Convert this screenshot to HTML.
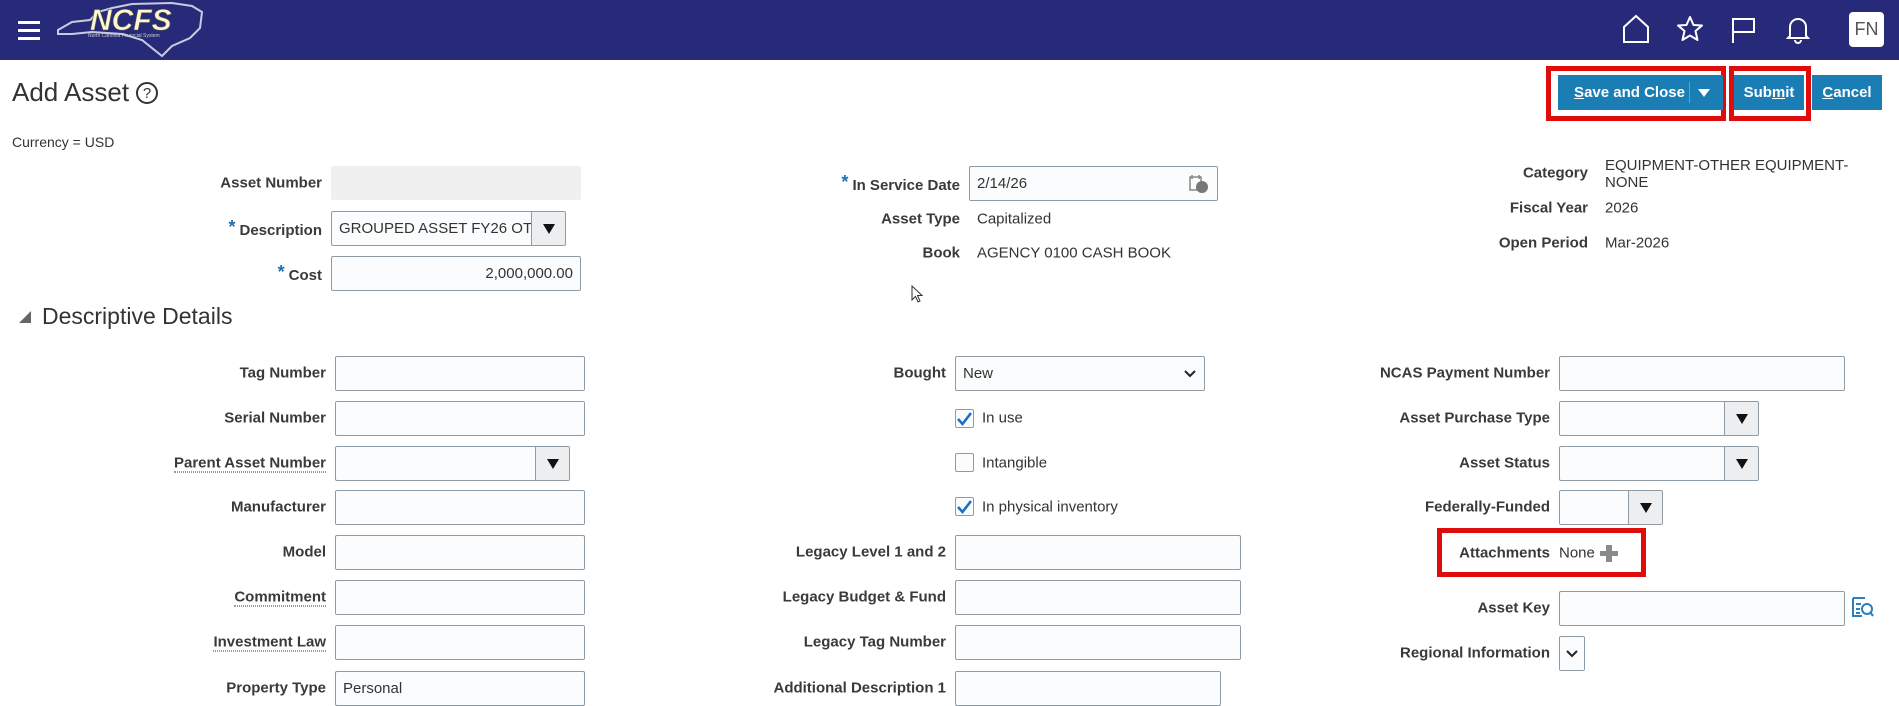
<!DOCTYPE html>
<html><head><meta charset="utf-8"><style>
*{box-sizing:border-box;margin:0;padding:0}
body{width:1899px;height:686px;overflow:hidden;background:#fff;font-family:"Liberation Sans",Arial,sans-serif;color:#333;position:relative}
.a{position:absolute}
.hdr{left:0;top:0;width:1899px;height:60px;background:#262a78}
.lbl{position:absolute;font-size:15px;font-weight:bold;color:#3a3a3a;text-align:right;white-space:nowrap;transform:translateY(-50%)}
.val{position:absolute;font-size:15px;color:#333;white-space:nowrap;transform:translateY(-50%)}
.inp{position:absolute;height:35px;border:1px solid #8f9ba5;border-radius:2px;background:#fbfcfd;font-size:15px;color:#333;padding:0 7px;line-height:33px;white-space:nowrap;overflow:hidden}
.dd{position:absolute;top:0;right:0;bottom:0;border-left:1px solid #8f9ba5;background:#eceef0}
.dd:after{content:"";position:absolute;left:50%;top:50%;margin:-5px 0 0 -6px;border-left:6px solid transparent;border-right:6px solid transparent;border-top:10px solid #111}
.ul{border-bottom:1px dotted #333}
.req{color:#1f6fb0;font-weight:bold;font-size:18px;margin-right:4px;vertical-align:2px}
.btn{position:absolute;top:75px;height:35px;background:#1a7db4;color:#fff;font-weight:bold;font-size:15px;line-height:35px;text-align:center}
.red{position:absolute;border:5px solid #e00b0b}
.cb{position:absolute;width:19px;height:19px;border:1px solid #8f9ba5;border-radius:2px;background:#fbfcfd}
</style></head><body>
<div class="a hdr"></div>
<div class="a" style="left:18px;top:21px;width:22px;height:3px;background:#fff"></div>
<div class="a" style="left:18px;top:29px;width:22px;height:3px;background:#fff"></div>
<div class="a" style="left:18px;top:37px;width:22px;height:3px;background:#fff"></div>
<svg class="a" style="left:52px;top:0" width="160" height="60" viewBox="0 0 160 60">
<path d="M6 30 L20 22 L38 20 L46 12 L60 8 L80 4 L120 3 L140 6 L150 12 L148 28 L138 38 L120 46 L110 56 L90 40 L70 34 L40 32 L20 34 L6 34 Z" fill="none" stroke="#c9cbe0" stroke-width="2"/>
<text x="38" y="30" font-family="Liberation Sans" font-weight="bold" font-style="italic" font-size="30" fill="#fff6d0" stroke="#555" stroke-width="0.6">NCFS</text>
<text x="36" y="37" font-family="Liberation Sans" font-size="5" fill="#ccc">North Carolina Financial System</text>
</svg>
<svg class="a" style="left:1622px;top:14px" width="28" height="30" viewBox="0 0 28 30"><path d="M2 13 L14 2 L26 13 V28 H2 Z" fill="none" stroke="#fff" stroke-width="2"/></svg>
<svg class="a" style="left:1676px;top:15px" width="28" height="28" viewBox="0 0 28 28"><path d="M14 2 L17.5 10 L26 10.5 L19.5 16 L21.5 25 L14 20.5 L6.5 25 L8.5 16 L2 10.5 L10.5 10 Z" fill="none" stroke="#fff" stroke-width="2" stroke-linejoin="round"/></svg>
<svg class="a" style="left:1731px;top:16px" width="26" height="28" viewBox="0 0 26 28"><path d="M2 27 V3 H23 V16 H2" fill="none" stroke="#fff" stroke-width="2"/></svg>
<svg class="a" style="left:1786px;top:15px" width="24" height="30" viewBox="0 0 24 30"><path d="M4 21 V12 a8 8 0 0 1 16 0 V21 L22 23 H2 Z M9 25 a3 3 0 0 0 6 0" fill="none" stroke="#fff" stroke-width="2"/></svg>
<div class="a" style="left:1849px;top:12px;width:35px;height:35px;background:#fff;border-radius:4px;color:#555;font-size:18px;text-align:center;line-height:35px">FN</div>

<div class="a" style="left:12px;top:77px;font-size:26px;color:#333">Add Asset</div>
<div class="a" style="left:136px;top:82px;width:22px;height:22px;border:2px solid #333;border-radius:50%;font-size:15px;text-align:center;line-height:19px">?</div>
<div class="a" style="left:12px;top:134px;font-size:14px">Currency = USD</div>

<div class="red" style="left:1546px;top:66px;width:180px;height:55px"></div>
<div class="red" style="left:1729px;top:66px;width:82px;height:55px"></div>
<div class="btn" style="left:1558px;width:165px"><span style="position:absolute;left:12px;width:119px"><u>S</u>ave and Close</span><span style="position:absolute;left:131px;top:7px;width:1px;height:21px;background:#5ba3cc"></span><span style="position:absolute;left:140px;top:14px;border-left:6px solid transparent;border-right:6px solid transparent;border-top:8px solid #fff"></span></div>
<div class="btn" style="left:1734px;width:70px">Sub<u>m</u>it</div>
<div class="btn" style="left:1812px;width:70px"><u>C</u>ancel</div>

<div class="lbl" style="right:1577px;top:183px">Asset Number</div>
<div class="a" style="left:331px;top:166px;width:250px;height:34px;background:#f0f0f0;border-radius:2px"></div>
<div class="lbl" style="right:1577px;top:228px"><span class="req">*</span>Description</div>
<div class="inp" style="left:331px;top:211px;width:235px">GROUPED ASSET FY26 OT<div class="dd" style="width:34px"></div></div>
<div class="lbl" style="right:1577px;top:273px"><span class="req">*</span>Cost</div>
<div class="inp" style="left:331px;top:256px;width:250px;text-align:right">2,000,000.00</div>

<div class="lbl" style="right:939px;top:183px"><span class="req">*</span>In Service Date</div>
<div class="inp" style="left:969px;top:166px;width:249px">2/14/26
<svg style="position:absolute;right:8px;top:7px" width="20" height="20" viewBox="0 0 20 20"><rect x="1" y="3" width="11" height="13" fill="none" stroke="#888" stroke-width="1.5"/><path d="M3 1v4M10 1v4" stroke="#888" stroke-width="1.5"/><circle cx="13" cy="13" r="6" fill="#777"/></svg></div>
<div class="lbl" style="right:939px;top:219px">Asset Type</div>
<div class="val" style="left:977px;top:219px">Capitalized</div>
<div class="lbl" style="right:939px;top:253px">Book</div>
<div class="val" style="left:977px;top:253px">AGENCY 0100 CASH BOOK</div>
<svg class="a" style="left:911px;top:285px" width="14" height="20" viewBox="0 0 14 20"><path d="M1 1 L1 15 L4.5 11.5 L7 17 L9 16 L6.5 10.5 L11 10.5 Z" fill="#fff" stroke="#333" stroke-width="1"/></svg>

<div class="lbl" style="right:311px;top:173px">Category</div>
<div class="val" style="left:1605px;top:172px;transform:none;top:157px;line-height:17px">EQUIPMENT-OTHER EQUIPMENT-<br>NONE</div>
<div class="lbl" style="right:311px;top:208px">Fiscal Year</div>
<div class="val" style="left:1605px;top:208px">2026</div>
<div class="lbl" style="right:311px;top:243px">Open Period</div>
<div class="val" style="left:1605px;top:243px">Mar-2026</div>

<div class="a" style="left:19px;top:311px;width:0;height:0;border-left:12px solid transparent;border-bottom:12px solid #666"></div>
<div class="a" style="left:42px;top:303px;font-size:23px;color:#333">Descriptive Details</div>

<!-- left column -->
<div class="lbl" style="right:1573px;top:373px">Tag Number</div>
<div class="inp" style="left:335px;top:356px;width:250px"></div>
<div class="lbl" style="right:1573px;top:418px">Serial Number</div>
<div class="inp" style="left:335px;top:401px;width:250px"></div>
<div class="lbl" style="right:1573px;top:463px"><span class="ul">Parent Asset Number</span></div>
<div class="inp" style="left:335px;top:446px;width:235px"><div class="dd" style="width:34px"></div></div>
<div class="lbl" style="right:1573px;top:507px">Manufacturer</div>
<div class="inp" style="left:335px;top:490px;width:250px"></div>
<div class="lbl" style="right:1573px;top:552px">Model</div>
<div class="inp" style="left:335px;top:535px;width:250px"></div>
<div class="lbl" style="right:1573px;top:597px"><span class="ul">Commitment</span></div>
<div class="inp" style="left:335px;top:580px;width:250px"></div>
<div class="lbl" style="right:1573px;top:642px"><span class="ul">Investment Law</span></div>
<div class="inp" style="left:335px;top:625px;width:250px"></div>
<div class="lbl" style="right:1573px;top:688px">Property Type</div>
<div class="inp" style="left:335px;top:671px;width:250px">Personal</div>

<!-- middle column -->
<div class="lbl" style="right:953px;top:373px">Bought</div>
<div class="inp" style="left:955px;top:356px;width:250px">New<svg style="position:absolute;right:8px;top:13px" width="12" height="8" viewBox="0 0 12 8"><path d="M1 1 L6 6 L11 1" fill="none" stroke="#222" stroke-width="2"/></svg></div>
<div class="cb" style="left:955px;top:409px"><svg width="17" height="17" viewBox="0 0 17 17"><path d="M2 9 L6.5 14 L15 3" fill="none" stroke="#1a6fc4" stroke-width="2.6"/></svg></div>
<div class="val" style="left:982px;top:418px">In use</div>
<div class="cb" style="left:955px;top:453px"></div>
<div class="val" style="left:982px;top:463px">Intangible</div>
<div class="cb" style="left:955px;top:497px"><svg width="17" height="17" viewBox="0 0 17 17"><path d="M2 9 L6.5 14 L15 3" fill="none" stroke="#1a6fc4" stroke-width="2.6"/></svg></div>
<div class="val" style="left:982px;top:507px">In physical inventory</div>
<div class="lbl" style="right:953px;top:552px">Legacy Level 1 and 2</div>
<div class="inp" style="left:955px;top:535px;width:286px"></div>
<div class="lbl" style="right:953px;top:597px">Legacy Budget &amp; Fund</div>
<div class="inp" style="left:955px;top:580px;width:286px"></div>
<div class="lbl" style="right:953px;top:642px">Legacy Tag Number</div>
<div class="inp" style="left:955px;top:625px;width:286px"></div>
<div class="lbl" style="right:953px;top:688px">Additional Description 1</div>
<div class="inp" style="left:955px;top:671px;width:266px"></div>

<!-- right column -->
<div class="lbl" style="right:349px;top:373px">NCAS Payment Number</div>
<div class="inp" style="left:1559px;top:356px;width:286px"></div>
<div class="lbl" style="right:349px;top:418px">Asset Purchase Type</div>
<div class="inp" style="left:1559px;top:401px;width:200px"><div class="dd" style="width:34px"></div></div>
<div class="lbl" style="right:349px;top:463px">Asset Status</div>
<div class="inp" style="left:1559px;top:446px;width:200px"><div class="dd" style="width:34px"></div></div>
<div class="lbl" style="right:349px;top:507px">Federally-Funded</div>
<div class="inp" style="left:1559px;top:490px;width:104px"><div class="dd" style="width:34px"></div></div>
<div class="red" style="left:1437px;top:528px;width:209px;height:49px"></div>
<div class="lbl" style="right:349px;top:553px">Attachments</div>
<div class="val" style="left:1559px;top:553px">None</div>
<div class="a" style="left:1600px;top:551px;width:18px;height:5px;background:#8a8a8a"></div>
<div class="a" style="left:1606px;top:545px;width:6px;height:17px;background:#8a8a8a"></div>
<div class="lbl" style="right:349px;top:608px">Asset Key</div>
<div class="inp" style="left:1559px;top:591px;width:286px"></div>
<svg class="a" style="left:1852px;top:596px" width="22" height="24" viewBox="0 0 22 24"><path d="M1 2 H13 M1 2 V20 H10 M4 8 H9 M4 13 H8 M4 17 H8" fill="none" stroke="#2a7fc0" stroke-width="2"/><circle cx="15" cy="13" r="5" fill="none" stroke="#2a7fc0" stroke-width="2"/><path d="M18.5 16.5 L21 20" stroke="#2a7fc0" stroke-width="2"/></svg>
<div class="lbl" style="right:349px;top:653px">Regional Information</div>
<div class="inp" style="left:1559px;top:636px;width:26px"><svg style="position:absolute;left:6px;top:13px" width="12" height="8" viewBox="0 0 12 8"><path d="M1 1 L6 6 L11 1" fill="none" stroke="#222" stroke-width="2"/></svg></div>
</body></html>
